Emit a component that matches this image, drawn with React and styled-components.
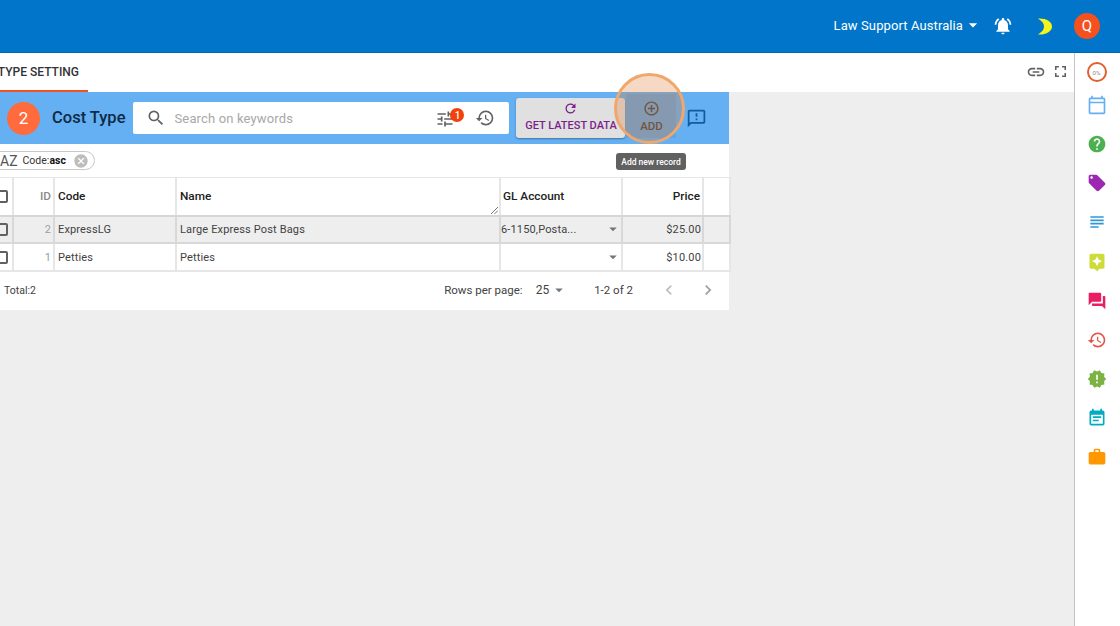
import styled, { createGlobalStyle } from "styled-components";
import {
  MdArrowDropDown,
  MdAssistant,
  MdAddCircleOutline,
  MdCancel,
  MdChevronLeft,
  MdChevronRight,
  MdEventNote,
  MdForum,
  MdFullscreen,
  MdHelp,
  MdHistory,
  MdLink,
  MdLocalOffer,
  MdNewReleases,
  MdNotificationsActive,
  MdOutlineCalendarToday,
  MdOutlineFeedback,
  MdRefresh,
  MdRestore,
  MdSearch,
  MdSubject,
  MdTune,
  MdWork,
} from "react-icons/md";

const GlobalStyle = createGlobalStyle`
  html, body {
    margin: 0;
    height: 100%;
    overflow: hidden;
    background: #eeeeee;
    font-family: Roboto, "Liberation Sans", sans-serif;
    color: #212121;
  }
  * {
    box-sizing: border-box;
  }
`;

const Page = styled.div`
  width: 1120px;
  height: 626px;
  display: flex;
  flex-direction: column;
  overflow: hidden;
`;

const Header = styled.header`
  height: 53px;
  flex: none;
  background: #0075c9;
  border-bottom: 1px solid #0069b4;
  display: flex;
  align-items: center;
  justify-content: flex-end;
  padding-right: 20px;
  color: #fff;
`;

const Company = styled.div`
  display: flex;
  align-items: center;
  font-size: 13px;
  letter-spacing: 0.1px;
  margin: 0 10px 2px 0;
`;

const HeaderIcon = styled.span`
  display: flex;
  color: ${(props) => props.$color || "#fff"};
  margin-right: ${(props) => props.$gap}px;
`;

const Avatar = styled.div`
  width: 26px;
  height: 26px;
  border-radius: 50%;
  background: #f4511e;
  color: #fff;
  font-size: 15px;
  display: flex;
  align-items: center;
  justify-content: center;
`;

const Body = styled.div`
  flex: 1;
  display: flex;
  min-height: 0;
`;

const Main = styled.main`
  flex: 1;
  min-width: 0;
  overflow: hidden;
`;

const TabBar = styled.div`
  height: 39px;
  background: #fff;
  display: flex;
  justify-content: space-between;
  align-items: stretch;
`;

const Tab = styled.div`
  margin-left: -36px;
  width: 124px;
  padding-top: 12px;
  border-bottom: 2px solid #f4511e;
  font-size: 12px;
  font-weight: 500;
  white-space: nowrap;
  text-align: right;
  padding-right: 9px;
  color: #333;
`;

const TabActions = styled.div`
  display: flex;
  align-items: center;
  gap: 5px;
  padding: 0 4px 2px 0;
  color: #616161;
`;

const Panel = styled.section`
  position: relative;
  width: 749px;
  margin-left: -20px;
`;

const Toolbar = styled.div`
  height: 52px;
  background: #64b0f2;
  display: flex;
  align-items: center;
  padding-left: 27px;
`;

const StepBadge = styled.div`
  width: 33px;
  height: 33px;
  flex: none;
  border-radius: 50%;
  background: #ff6b3d;
  color: #fff;
  font-size: 17px;
  display: flex;
  align-items: center;
  justify-content: center;
  margin-right: 12px;
`;

const Title = styled.h1`
  margin: 0 8px 2px 0;
  font-size: 16.5px;
  font-weight: 500;
  color: #0f2a47;
  white-space: nowrap;
`;

const SearchBox = styled.div`
  width: 376px;
  height: 32px;
  background: #fff;
  border-radius: 2px;
  display: flex;
  align-items: center;
  padding: 0 14px 0 13px;
  color: #616161;
`;

const Placeholder = styled.span`
  flex: 1;
  margin-left: 8px;
  font-size: 13px;
  letter-spacing: 0.15px;
  color: #a8a8a8;
`;

const FilterButton = styled.span`
  position: relative;
  display: flex;
  margin: 2px 20px 0 0;
`;

const CountBadge = styled.span`
  position: absolute;
  top: -1px;
  right: -9px;
  width: 14px;
  height: 14px;
  border-radius: 50%;
  background: #f4410b;
  color: #fff;
  font-size: 10px;
  font-weight: 500;
  display: flex;
  align-items: center;
  justify-content: center;
`;

const LatestButton = styled.button`
  width: 109px;
  height: 40px;
  margin-left: 7px;
  border: 0;
  border-radius: 3px;
  padding: 3px 0 0;
  background: #e0e0e0;
  box-shadow: 0 1px 2px rgba(0, 0, 0, 0.35);
  color: #7b1f8c;
  font: 500 11px Roboto, sans-serif;
  display: flex;
  flex-direction: column;
  align-items: center;
  gap: 3px;
  white-space: nowrap;
`;

const AddButton = styled.button`
  width: 50px;
  height: 44px;
  margin: -4px 0 0 1px;
  border: 0;
  padding: 0;
  background: rgba(0, 0, 0, 0.06);
  color: #424242;
  font: 500 11.5px Roboto, sans-serif;
  display: flex;
  flex-direction: column;
  align-items: center;
  justify-content: center;
  gap: 2px;
`;

const FeedbackIcon = styled.span`
  display: flex;
  margin-left: 10px;
  color: #0d5c9e;
`;

const Highlight = styled.div`
  position: absolute;
  left: 634px;
  top: -19px;
  width: 71px;
  height: 71px;
  border-radius: 50%;
  border: 3px solid #f0a76c;
  background: rgba(225, 130, 60, 0.3);
`;

const Tooltip = styled.div`
  position: absolute;
  left: 636px;
  top: 61px;
  width: 70px;
  height: 17px;
  border-radius: 3px;
  background: #616161;
  color: #fff;
  font-size: 8.5px;
  font-weight: 500;
  display: flex;
  align-items: center;
  justify-content: center;
  white-space: nowrap;
`;

const SortRow = styled.div`
  height: 33px;
  background: #fff;
  display: flex;
  align-items: center;
  padding-left: 10px;
`;

const SortChip = styled.div`
  height: 19px;
  width: 105px;
  border: 1px solid #c8c8c8;
  border-radius: 10px;
  display: flex;
  align-items: center;
  padding-left: 9px;
  font-size: 10.5px;
  color: #333;
  b {
    font-weight: 700;
    color: #111;
  }
`;

const SortGlyph = styled.span`
  font-size: 14px;
  margin-right: 5px;
  color: #555;
`;

const ChipClose = styled.span`
  display: flex;
  margin-left: 7px;
  color: #bdbdbd;
`;

const Table = styled.table`
  width: 100%;
  table-layout: fixed;
  border-collapse: collapse;
  background: #fff;
  font-size: 11px;
`;

const HeadCell = styled.th`
  position: relative;
  height: 38px;
  border: 2px solid #e6e6e6;
  border-top-width: 1px;
  border-bottom-color: #d6d6d6;
  padding: 0 2px 0 ${(props) => (props.$flush ? 2 : 3)}px;
  font-size: 11.8px;
  font-weight: 500;
  color: ${(props) => (props.$muted ? "#8a8a8a" : "#212121")};
  text-align: ${(props) => props.$align || "left"};
`;

const Row = styled.tr`
  background: ${(props) => (props.$active ? "#eeeeee" : "#fff")};
`;

const Cell = styled.td`
  height: ${(props) => (props.$active ? 27 : 28)}px;
  border: 2px solid ${(props) => (props.$active ? "#d8d8d8" : "#e6e6e6")};
  border-top-color: #d8d8d8;
  padding: ${(props) => (props.$active ? 0 : 1)}px ${(props) => (props.$money ? 1 : 2)}px 0 3px;
  letter-spacing: 0.15px;
  color: ${(props) => (props.$muted ? "#9e9e9e" : "#424242")};
  text-align: ${(props) => props.$align || "left"};
  white-space: nowrap;
  overflow: hidden;
`;

const CheckBox = styled.span`
  display: block;
  width: 13px;
  height: 13px;
  margin-left: 10px;
  border: 2px solid #616161;
  border-radius: 2px;
`;

const Resize = styled.svg`
  position: absolute;
  right: 1px;
  bottom: 1px;
`;

const SelectCell = styled.div`
  display: flex;
  align-items: center;
  justify-content: space-between;
  margin-left: -3px;
  color: #424242;
  svg {
    color: #757575;
    margin-right: -3px;
  }
`;

const Footer = styled.div`
  height: 38px;
  background: #fff;
  display: flex;
  align-items: center;
  padding: 0 0 1px 24px;
  font-size: 11.5px;
  color: #424242;
`;

const Total = styled.span`
  flex: 1;
  font-size: 10.5px;
`;

const RowsLabel = styled.span`
  margin-right: 13px;
`;

const RowsValue = styled.span`
  display: flex;
  align-items: center;
  font-size: 12px;
  margin-right: 26px;
  svg {
    color: #757575;
    margin-left: 1px;
  }
`;

const PageRange = styled.span`
  margin-right: 26px;
`;

const Pager = styled.span`
  display: flex;
  gap: 19px;
  margin-right: 11px;
  color: #bdbdbd;
  svg:last-child {
    color: #9e9e9e;
  }
`;

const Rail = styled.aside`
  width: 46px;
  flex: none;
  background: #fff;
  border-left: 1px solid #c4c4c4;
  display: flex;
  flex-direction: column;
  align-items: center;
  padding: 9px 2px 0 0;
`;

const Progress = styled.div`
  width: 20px;
  height: 20px;
  border-radius: 50%;
  border: 2px solid #e0602c;
  color: #8a8a8a;
  font-size: 6px;
  display: flex;
  align-items: center;
  justify-content: center;
`;

const RailIcon = styled.span`
  display: flex;
  height: 20px;
  margin-top: ${(props) => props.$gap || 19.15}px;
  color: ${(props) => props.$color};
`;

const railItems = [
  { Icon: MdOutlineCalendarToday, color: "#64b0f2", gap: 13 },
  { Icon: MdHelp, color: "#4caf50" },
  { Icon: MdLocalOffer, color: "#9c27b0" },
  { Icon: MdSubject, color: "#2f96dc" },
  { Icon: MdAssistant, color: "#cddc39" },
  { Icon: MdForum, color: "#e91e63" },
  { Icon: MdHistory, color: "#e5534b" },
  { Icon: MdNewReleases, color: "#7cb342" },
  { Icon: MdEventNote, color: "#00acc1" },
  { Icon: MdWork, color: "#ff9800" },
];

const rows = [
  { id: 2, code: "ExpressLG", name: "Large Express Post Bags", account: "6-1150,Posta...", price: "$25.00", active: true },
  { id: 1, code: "Petties", name: "Petties", account: "", price: "$10.00", active: false },
];

const App = () => {
  return (
    <Page>
      <GlobalStyle />
      <Header>
        <Company>
          Law Support Australia
          <MdArrowDropDown size={20} />
        </Company>
        <HeaderIcon $gap={25}>
          <MdNotificationsActive size={20} />
        </HeaderIcon>
        <HeaderIcon $gap={22} $color="#f5f51e">
          <svg width="14" height="17" viewBox="0 0 14 17">
            <path d="M0 0.5C8 0 14 3.5 14 8.5S8 17 0 16.5C4 14 6 11.5 6 8.5S4 3 0 0.5Z" fill="currentColor" />
          </svg>
        </HeaderIcon>
        <Avatar>Q</Avatar>
      </Header>
      <Body>
        <Main>
          <TabBar>
            <Tab>COST TYPE SETTING</Tab>
            <TabActions>
              <MdLink size={20} />
              <MdFullscreen size={19} />
            </TabActions>
          </TabBar>
          <Panel>
            <Toolbar>
              <StepBadge>2</StepBadge>
              <Title>Cost Type</Title>
              <SearchBox>
                <MdSearch size={20} />
                <Placeholder>Search on keywords</Placeholder>
                <FilterButton>
                  <MdTune size={20} />
                  <CountBadge>1</CountBadge>
                </FilterButton>
                <MdRestore size={20} />
              </SearchBox>
              <LatestButton>
                <MdRefresh size={15} />
                GET LATEST DATA
              </LatestButton>
              <AddButton>
                <MdAddCircleOutline size={17} />
                ADD
              </AddButton>
              <FeedbackIcon>
                <MdOutlineFeedback size={21} />
              </FeedbackIcon>
            </Toolbar>
            <Highlight />
            <Tooltip>Add new record</Tooltip>
            <SortRow>
              <SortChip>
                <SortGlyph>AZ</SortGlyph>
                <span>
                  Code:<b>asc</b>
                </span>
                <ChipClose>
                  <MdCancel size={16} />
                </ChipClose>
              </SortChip>
            </SortRow>
            <Table>
              <colgroup>
                <col width="32" />
                <col width="41" />
                <col width="122" />
                <col width="324" />
                <col width="122" />
                <col width="81" />
                <col width="27" />
              </colgroup>
              <thead>
                <tr>
                  <HeadCell>
                    <CheckBox />
                  </HeadCell>
                  <HeadCell $align="right" $muted>
                    ID
                  </HeadCell>
                  <HeadCell>Code</HeadCell>
                  <HeadCell>
                    Name
                    <Resize width="8" height="8" viewBox="0 0 8 8">
                      <path d="M1 8L8 1M4.5 8L8 4.5" stroke="#777" fill="none" />
                    </Resize>
                  </HeadCell>
                  <HeadCell $flush>GL Account</HeadCell>
                  <HeadCell $align="right">Price</HeadCell>
                  <HeadCell />
                </tr>
              </thead>
              <tbody>
                {rows.map((row) => (
                  <Row key={row.id} $active={row.active}>
                    <Cell $active={row.active}>
                      <CheckBox />
                    </Cell>
                    <Cell $active={row.active} $align="right" $muted>
                      {row.id}
                    </Cell>
                    <Cell $active={row.active}>{row.code}</Cell>
                    <Cell $active={row.active}>{row.name}</Cell>
                    <Cell $active={row.active}>
                      <SelectCell>
                        <span>{row.account}</span>
                        <MdArrowDropDown size={18} />
                      </SelectCell>
                    </Cell>
                    <Cell $active={row.active} $align="right" $money>
                      {row.price}
                    </Cell>
                    <Cell $active={row.active} />
                  </Row>
                ))}
              </tbody>
            </Table>
            <Footer>
              <Total>Total:2</Total>
              <RowsLabel>Rows per page:</RowsLabel>
              <RowsValue>
                25
                <MdArrowDropDown size={18} />
              </RowsValue>
              <PageRange>1-2 of 2</PageRange>
              <Pager>
                <MdChevronLeft size={20} />
                <MdChevronRight size={20} />
              </Pager>
            </Footer>
          </Panel>
        </Main>
        <Rail>
          <Progress>0%</Progress>
          {railItems.map(({ Icon, color, gap }) => (
            <RailIcon key={color} $color={color} $gap={gap}>
              <Icon size={20} />
            </RailIcon>
          ))}
        </Rail>
      </Body>
    </Page>
  );
};

export default App;
